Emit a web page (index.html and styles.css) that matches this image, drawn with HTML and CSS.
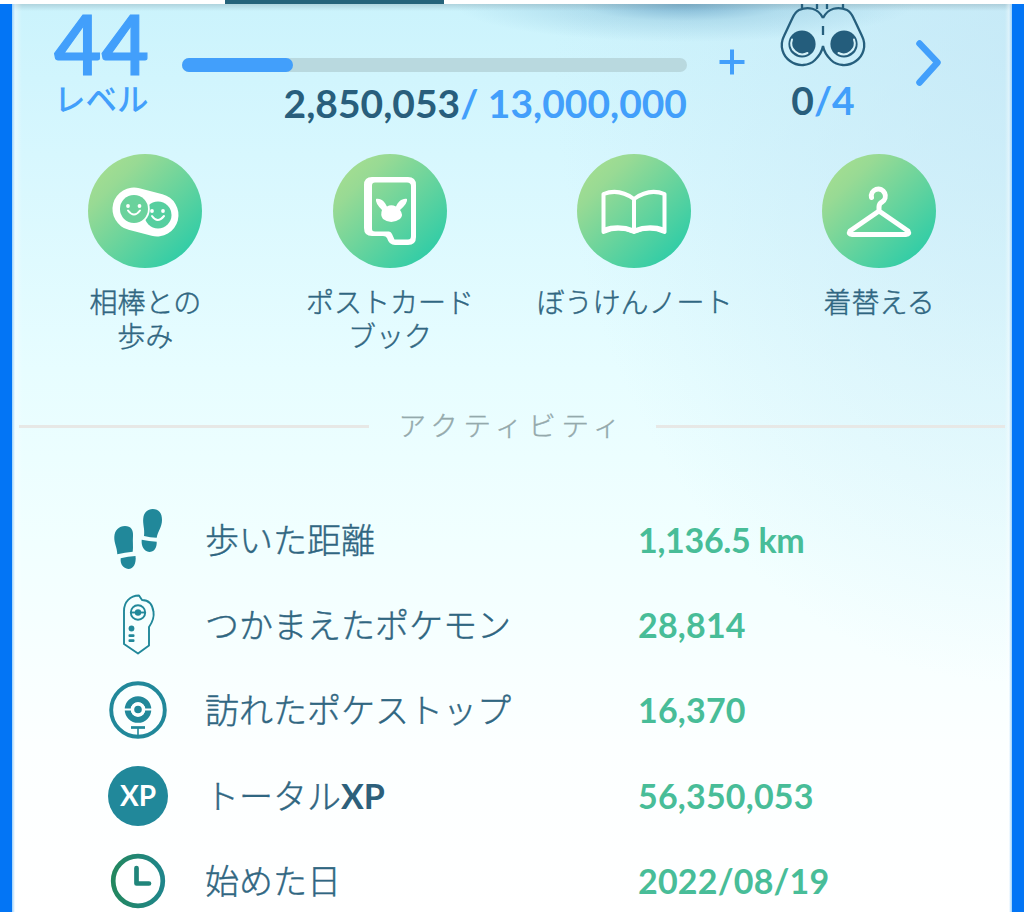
FILE: index.html
```html
<!DOCTYPE html>
<html lang="ja">
<head>
<meta charset="utf-8">
<title>トレーナー</title>
<link rel="stylesheet" href="styles.css">
</head>
<body>
<div class="tabs"><div class="tab-active"></div></div>
<main class="profile">
  <header class="summary">
    <div class="level"><div class="level-number">44</div><div class="level-label">レベル</div></div>
    <div class="progress">
      <div class="bar"><div class="bar-fill" style="width:21.9%"></div></div>
      <div class="xp"><span class="dark">2,850,053</span>/ 13,000,000</div>
    </div>
    <svg class="plus" viewBox="0 0 26 26"><path d="M13 0.5V25.5M0.5 13H25.5"/></svg>
    <div class="tasks">
      <svg class="binoculars" viewBox="0 0 86 64">
        <g class="line">
          <path d="M22 0V4M37 0V5M47 0V5M63 0V4"/>
          <path d="M43 14C38 4 28 2 19 6Q15 8 12 15L4 32C-1 42 3 52 10 57C18 63 29 62 35 56C39 52 42 48 43 42C44 48 47 52 51 56C57 62 68 63 76 57C83 52 87 42 82 32L74 15Q71 8 67 6C58 2 48 4 43 14"/>
          <path d="M43 22V31"/>
        </g>
        <circle class="solid" cx="22" cy="40" r="13.6"/><circle class="solid" cx="64" cy="40" r="13.6"/>
        <path class="shine" d="M12 35.500A11 11 0 0 0 27.500 49M74 35.500A11 11 0 0 1 58.500 49"/>
      </svg>
      <div class="task-count"><span class="dark">0</span>/4</div>
    </div>
    <svg class="chevron" viewBox="0 0 26 46"><path d="M3.500 3.500L21.500 22.500L3.500 42.500"/></svg>
  </header>

  <nav class="actions">
    <div class="action">
      <svg class="badge" viewBox="0 0 114 114">
        <defs><linearGradient id="mint" x1=".18" y1=".15" x2=".85" y2=".85"><stop offset="0" stop-color="#9fdc92"/><stop offset=".12" stop-color="#98da94"/><stop offset="1" stop-color="#34cda6"/></linearGradient></defs>
        <circle cx="57" cy="57" r="57" fill="url(#mint)"/>
        <path d="M46 55L69 61" stroke="#fff" stroke-width="43" stroke-linecap="round"/>
        <circle cx="70" cy="61" r="13.500" fill="#56cf9f"/>
        <circle cx="46" cy="55" r="15.800" fill="#fff"/>
        <circle cx="46" cy="55" r="14" fill="#6ad29c"/>
        <g fill="#fff"><circle cx="40" cy="52" r="1.900"/><circle cx="51.500" cy="52" r="1.900"/><circle cx="64" cy="57" r="1.900"/><circle cx="75" cy="57" r="1.900"/></g>
        <path d="M40 56.500Q46 64.500 52 56.500M64 62Q69.500 70 76 62" class="smile"/>
      </svg>
      <div class="caption">相棒との<br>歩み</div>
    </div>
    <div class="action">
      <svg class="badge" viewBox="0 0 114 114">
        <circle cx="57" cy="57" r="57" fill="url(#mint)"/>
        <path fill="#fff" fill-rule="evenodd" d="M39 23H75Q83 23 83 31V83Q83 91 75 91H62Q56 91 54 84Q53 82 50 82H39Q31 82 31 74V31Q31 23 39 23ZM42 28.500Q39 28.500 39 31.500V75Q39 77.500 42 77.500H56Q58 77.500 59 80L61.500 85.500H75Q78 85.500 78 82V32Q78 28.500 74 28.500Z"/>
        <path fill="#fff" d="M43 45C49 44 52 49 54 52.500Q58 50 63 52.500C65 48 69 44 74 45Q75 49 67 56Q71 61 67 65Q58 71 50 65Q47 61 49 56Q42 49 43 45Z"/>
      </svg>
      <div class="caption">ポストカード<br>ブック</div>
    </div>
    <div class="action">
      <svg class="badge" viewBox="0 0 114 114">
        <circle cx="57" cy="57" r="57" fill="url(#mint)"/>
        <path class="book" d="M57 45Q42 34 26.500 40V78Q42 71 57 78Q72 71 87.500 78V40Q72 34 57 45V78"/>
        <path class="pages" d="M27 76Q42 71 57 77Q72 71 87 76"/>
      </svg>
      <div class="caption">ぼうけんノート</div>
    </div>
    <div class="action">
      <svg class="badge" viewBox="0 0 114 114">
        <circle cx="57" cy="57" r="57" fill="url(#mint)"/>
        <path class="hanger" d="M49.500 43.500A7 7 0 1 1 60 48Q57 49.500 57 53V57M57 57L86 77Q88 80.500 84 80.500H30Q26 80.500 28 77Z"/>
      </svg>
      <div class="caption">着替える</div>
    </div>
  </nav>

  <h2 class="divider"><span>アクティビティ</span></h2>

  <section class="stats">
    <div class="stat">
      <svg class="icon" viewBox="0 0 60 60"><g fill="#21889a">
        <path d="M9.300 44.300C9 37 6 33 6.300 27C6.600 20 11 16 17 16C23 16 25.500 20 25 26C24.500 32 25.500 37 24.700 41.700Q17 42.500 9.300 44.300Z"/>
        <path d="M12.700 48.300Q20 46.500 27.500 46C28.500 53 25.500 59 20.300 59C15 58.500 12 54 12.700 48.300Z"/>
        <path d="M36 26C37 19 34.500 14 35.300 8C36 2.500 39.500-1 44.700-1C51-1 54 3 54 10C54 17 50 21 48.700 27.700Q42 27.500 36 26Z"/>
        <path d="M33.700 29.800Q41 31.500 48.700 31.700C49 38 46 42 41.300 42C36 41.500 33 36 33.700 29.800Z"/></g></svg>
      <div class="name">歩いた距離</div><div class="value value-km">1,136.5 km</div>
    </div>
    <div class="stat">
      <svg class="icon" viewBox="0 0 60 60"><g fill="none" stroke="#21889a" stroke-width="1.900" stroke-linejoin="round">
        <path d="M31 .5C22 .5 16 7 16 16V49L30 58.500L41 50.500V32C44.500 27 46.500 23 45.500 17C44.500 9 40 5 34 5L31 .5Z"/>
        <circle cx="30" cy="17.500" r="7.200"/><path d="M23 17.500H37"/></g>
        <g fill="#21889a"><circle cx="30" cy="17.500" r="3.200"/><circle cx="23.500" cy="33.500" r="2.900"/><rect x="20.500" y="39.300" width="6" height="2.800" rx="1"/><rect x="20.500" y="44.300" width="6" height="2.800" rx="1"/></g></svg>
      <div class="name">つかまえたポケモン</div><div class="value">28,814</div>
    </div>
    <div class="stat">
      <svg class="icon" viewBox="0 0 60 60"><g fill="none" stroke="#21889a">
        <circle cx="30" cy="30" r="26.800" stroke-width="3.900"/>
        <circle cx="30" cy="29.500" r="10.300" stroke-width="6"/></g>
        <path d="M15 29.500H45" stroke="#fcffff" stroke-width="2"/>
        <circle cx="30" cy="29.500" r="5.500" fill="#21889a" stroke="#fcffff" stroke-width="3.400"/>
        <path d="M23 47.500H37" fill="none" stroke="#21889a" stroke-width="2.700"/><path d="M30 47V57" stroke="#21889a" stroke-width="1.600"/></svg>
      <div class="name">訪れたポケストップ</div><div class="value">16,370</div>
    </div>
    <div class="stat">
      <div class="icon xp-badge">XP</div>
      <div class="name">トータル<b>XP</b></div><div class="value">56,350,053</div>
    </div>
    <div class="stat">
      <svg class="icon" viewBox="0 0 60 60"><defs><linearGradient id="clock"><stop offset="0" stop-color="#23875f"/><stop offset="1" stop-color="#1f858a"/></linearGradient></defs>
        <circle cx="30" cy="30" r="24.800" fill="none" stroke="url(#clock)" stroke-width="4.700"/>
        <path d="M28.500 17V32.500H41" fill="none" stroke="#20857a" stroke-width="4.700" stroke-linecap="round" stroke-linejoin="round"/></svg>
      <div class="name">始めた日</div><div class="value">2022/08/19</div>
    </div>
  </section>
</main>
</body>
</html>
```
FILE: styles.css
```css
* { box-sizing: border-box; }
body {
  margin: 0;
  height: 912px;
  overflow: hidden;
  display: flex;
  flex-direction: column;
  font-family: Lato, "Noto Sans CJK JP", sans-serif;
  color: #306681;
}
svg { display: block; overflow: visible; }
.tabs { height: 4px; padding-left: 225px; background: #fff; flex: none; }
.tab-active { width: 219px; height: 4px; background: #25637a; }
.profile {
  flex: 1;
  min-height: 0;
  border: solid #0375f5;
  border-width: 0 12px;
  background:
    linear-gradient(90deg, #9bd0fb 0, #ffffff66 3px, #fff0 10px calc(100% - 7px), #ffffff66 calc(100% - 3px), #9bd0fb 100%),
    linear-gradient(#7895a055, #7895a000 7px),
    radial-gradient(ellipse 230px 38px at 672px 0, #4b8db8a0, #76b2d04d 45%, #90cfe600),
    radial-gradient(ellipse 460px 640px at 100% 40px, #c5e6f5b0, #d0f2fb00),
    linear-gradient(#cbf3fc 0, #d7f7fe 150px, #e7fdff 365px, #f1ffff 540px, #fcffff 740px, #fff 100%);
}
.summary { display: flex; height: 150px; padding-left: 42px; }
.level { width: 128px; color: #429ffb; }
.level-number { height: 76px; font-size: 82px; line-height: 78px; font-weight: 600; -webkit-text-stroke: 1.2px; }
.level-label { width: 96px; font-size: 31.5px; line-height: 38px; font-weight: 500; white-space: nowrap; }
.progress { width: 505px; padding-top: 54px; }
.bar { height: 14px; border-radius: 7px; background: #b9d9df; }
.bar-fill { height: 14px; border-radius: 7px; background: #429ffb; }
.xp { margin-top: 9px; font-size: 39px; line-height: 44px; font-weight: 700; color: #429ffb; text-align: right; white-space: pre; }
.dark { color: #285e7c; font-weight: 700; }
.plus { width: 26px; height: 26px; margin: 45px 0 0 32px; fill: none; stroke: #429ffb; stroke-width: 4; }
.tasks { width: 86px; margin-left: 35px; text-align: center; }
.binoculars { width: 86px; height: 64px; }
.line { fill: none; stroke: #265f7d; stroke-width: 2.3; }
.solid { fill: #245d7c; }
.shine { fill: none; stroke: #d4f1f8; stroke-width: 2; stroke-linecap: round; }
.task-count { margin-top: 10px; font-size: 39px; line-height: 44px; font-weight: 700; color: #429ffb; }
.chevron { width: 26px; height: 46px; margin: 36px 0 0 50px; fill: none; stroke: #429ffb; stroke-width: 6.5; stroke-linecap: round; stroke-linejoin: round; }
.actions { display: grid; grid-template-columns: repeat(4, 244.600px); height: 249px; padding-left: 11px; }
.action { display: flex; flex-direction: column; align-items: center; }
.badge { width: 114px; height: 114px; fill: none; }
.smile { stroke: #fff; stroke-width: 2; stroke-linecap: round; }
.book { stroke: #fff; stroke-width: 4; stroke-linejoin: round; }
.pages { stroke: #fff; stroke-width: 5; }
.hanger { stroke: #fff; stroke-width: 5; stroke-linecap: round; stroke-linejoin: round; }
.caption { margin-top: 17px; font-size: 28px; line-height: 34px; font-weight: 300; -webkit-text-stroke: .45px; text-align: center; white-space: nowrap; }
.divider { display: flex; align-items: center; gap: 30px; height: 47px; margin: 0; padding: 0 7px 0 7px; font-size: 27.500px; font-weight: 300; letter-spacing: 5.700px; color: #94a9ac; -webkit-text-stroke: .4px; }
.divider::before, .divider::after { content: ""; flex: 1; height: 3px; background: #e7e8e6; }
.divider span { width: 227px; line-height: 36px; padding-bottom: 2px; white-space: nowrap; }
.stats { padding: 47px 0 0 96px; }
.stat { display: grid; grid-template-columns: 97px 433px 1fr; height: 85.300px; align-items: center; }
.icon { width: 60px; height: 60px; }
.name { font-size: 34px; line-height: 44px; font-weight: 300; -webkit-text-stroke: .45px; white-space: nowrap; }
.name b { font-weight: 700; color: #2d607b; -webkit-text-stroke: 0; }
.value { font-size: 34px; line-height: 44px; font-weight: 700; letter-spacing: .2px; color: #48bd98; white-space: nowrap; }
.value-km { letter-spacing: -.3px; }
.xp-badge { display: flex; align-items: center; justify-content: center; border-radius: 50%; background: #21889a; color: #fff; font-size: 28px; font-weight: 700; line-height: 56px; padding-bottom: 2px; }
```
